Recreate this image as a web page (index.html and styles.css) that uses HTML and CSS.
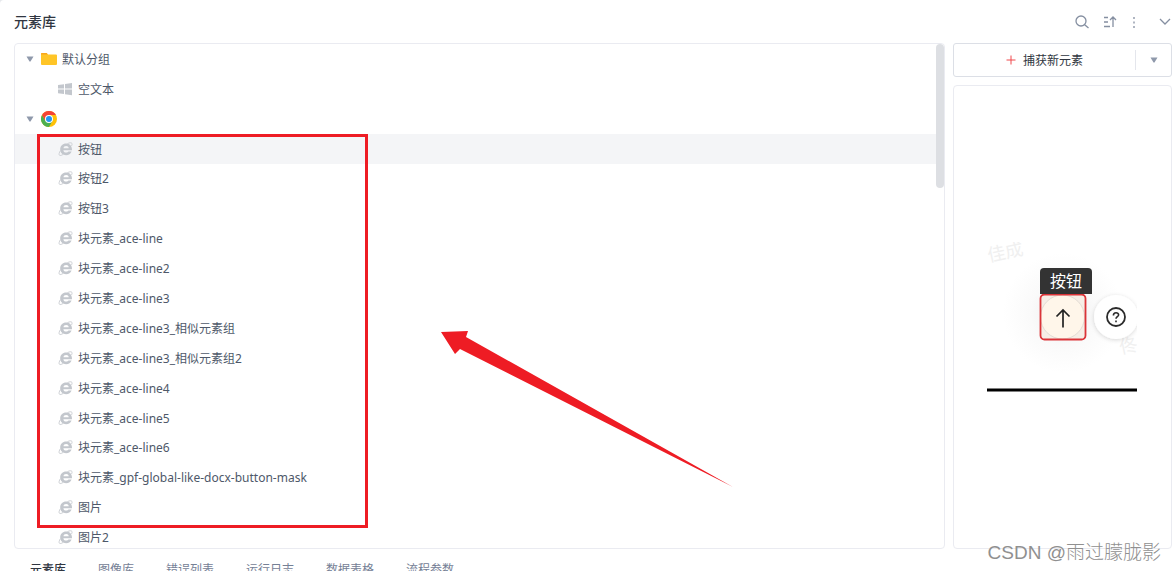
FILE: index.html
```html
<!DOCTYPE html>
<html lang="zh-CN">
<head>
<meta charset="utf-8">
<title>元素库</title>
<link rel="stylesheet" href="styles.css">
</head>
<body>
<svg class="defs" aria-hidden="true">
  <symbol id="ie" viewBox="0 0 16 16">
    <path d="M14 9.200H5.400c.1 1.500 1.100 2.300 2.700 2.300 1.100 0 1.900-.3 2.300-1h3.200c-.8 2.300-2.900 3.700-5.500 3.700-3.500 0-5.900-2.300-5.900-5.700S4.700 2.600 8.100 2.600c3.700 0 6.100 2.600 5.900 6.600zM5.500 7.200h5.200c-.1-1.400-1.100-2.200-2.600-2.200s-2.500.8-2.600 2.200z" fill="#c3c7cd" fill-rule="evenodd"/>
    <path d="M9.500 2.600C11.600 1.600 13.400 1.500 13.900 2.300c.3.600.2 1.500-.3 2.600M2.500 9.500C1.100 11.700.7 13.500 1.400 14.200c.7.600 2 .3 3.600-.7" fill="none" stroke="#cdd0d5" stroke-width="1"/>
  </symbol>
  <symbol id="caret" viewBox="0 0 8 6"><path d="M0.500 .5h7L4.500 5.500h-1z" fill="#8f99ab"/></symbol>
</svg>

<div class="app">
  <header class="header">
    <h1 class="title">元素库</h1>
    <div class="tools">
      <button class="tool" aria-label="搜索"><svg width="16" height="16" viewBox="0 0 16 16"><circle cx="7" cy="7" r="5" /><path d="M10.700 10.700 14.500 14"/></svg></button>
      <button class="tool" aria-label="排序"><svg width="16" height="16" viewBox="0 0 16 16"><path d="M2 3.500h4M2 8h4M2 12.500h6M11 13V3M8 6l3-3 3 3"/></svg></button>
      <button class="tool" aria-label="更多"><svg width="16" height="16" viewBox="0 0 16 16"><path d="M8 3v2M8 7.500v2M8 12v2"/></svg></button>
      <button class="tool tool-last" aria-label="收起"><svg width="16" height="16" viewBox="0 0 16 16"><path d="m3 5 5 5 5-5"/></svg></button>
    </div>
  </header>

  <main class="main">
    <section class="tree-box">
      <ul class="tree">
        <li class="row group"><button class="toggle" aria-label="折叠默认分组"><svg width="8" height="6"><use href="#caret"/></svg></button><svg width="16" height="16" viewBox="0 0 16 16"><path d="M0 3q0-1 1-1h4.500L7 3.500h8q1 0 1 1V13q0 1-1 1H1q-1 0-1-1z" fill="#ffc527"/><path d="M0 3q0-1 1-1h4.500L7 3.500H0z" fill="#f9a61b"/></svg><span>默认分组</span></li>
        <li class="row"><svg width="16" height="16" viewBox="0 0 16 16"><path d="M0 4l6-.8v4.400H0zM7 3l7-1v5.600H7zM0 8.600h6V13l-6-.8zM7 8.600h7v5.600l-7-1z" fill="#c3c7cd"/></svg><span>空文本</span></li>
        <li class="row group"><button class="toggle" aria-label="折叠浏览器分组"><svg width="8" height="6"><use href="#caret"/></svg></button><svg width="16" height="16" viewBox="0 0 16 16"><circle cx="8" cy="8" r="8" fill="#ffc107"/><path d="M1.070 4A8 8 0 0 0 8 16l3.460-6L8 8 4.540 10z" fill="#4caf50"/><path d="M1.070 4A8 8 0 0 1 14.930 4H8L4.540 10z" fill="#f44336"/><circle cx="8" cy="8" r="4" fill="#fff"/><circle cx="8" cy="8" r="3" fill="#2196f3"/></svg></li>
        <li class="row selected"><svg width="16" height="16"><use href="#ie"/></svg><span>按钮</span></li>
        <li class="row"><svg width="16" height="16"><use href="#ie"/></svg><span>按钮2</span></li>
        <li class="row"><svg width="16" height="16"><use href="#ie"/></svg><span>按钮3</span></li>
        <li class="row"><svg width="16" height="16"><use href="#ie"/></svg><span>块元素_ace-line</span></li>
        <li class="row"><svg width="16" height="16"><use href="#ie"/></svg><span>块元素_ace-line2</span></li>
        <li class="row"><svg width="16" height="16"><use href="#ie"/></svg><span>块元素_ace-line3</span></li>
        <li class="row"><svg width="16" height="16"><use href="#ie"/></svg><span>块元素_ace-line3_相似元素组</span></li>
        <li class="row"><svg width="16" height="16"><use href="#ie"/></svg><span>块元素_ace-line3_相似元素组2</span></li>
        <li class="row"><svg width="16" height="16"><use href="#ie"/></svg><span>块元素_ace-line4</span></li>
        <li class="row"><svg width="16" height="16"><use href="#ie"/></svg><span>块元素_ace-line5</span></li>
        <li class="row"><svg width="16" height="16"><use href="#ie"/></svg><span>块元素_ace-line6</span></li>
        <li class="row"><svg width="16" height="16"><use href="#ie"/></svg><span>块元素_gpf-global-like-docx-button-mask</span></li>
        <li class="row"><svg width="16" height="16"><use href="#ie"/></svg><span>图片</span></li>
        <li class="row"><svg width="16" height="16"><use href="#ie"/></svg><span>图片2</span></li>
      </ul>
      <div class="track"><div class="thumb"></div></div>
    </section>

    <aside class="side">
      <div class="capture">
        <button class="capture-main"><svg width="10" height="10" viewBox="0 0 10 10"><path d="M5 .5v9M.5 5h9" stroke="#f0494c" fill="none"/></svg><span>捕获新元素</span></button>
        <button class="capture-more" aria-label="更多捕获方式"><svg width="8" height="6"><use href="#caret"/></svg></button>
      </div>
      <div class="preview">
        <svg class="shot" width="150" height="150" viewBox="0 0 150 150" role="img" aria-label="按钮预览">
          <defs>
            <radialGradient id="halo"><stop offset="0" stop-color="#ededee"/><stop offset=".55" stop-color="#fafafa"/><stop offset="1" stop-color="#fff"/></radialGradient>
            <filter id="soft" x="-30%" y="-30%" width="160%" height="160%"><feDropShadow dx="0" dy="1" stdDeviation="2" flood-opacity=".16"/></filter>
          </defs>
          <circle cx="76" cy="71" r="60" fill="url(#halo)"/>
          <text class="ghost" x="2" y="20" transform="rotate(-12 2 20)">佳成</text>
          <text class="ghost" x="134" y="112" transform="rotate(-12 134 112)">佟</text>
          <circle cx="129" cy="75" r="22" fill="#fff" filter="url(#soft)"/>
          <circle cx="129" cy="75" r="9" fill="none" stroke="#2b2b2b" stroke-width="1.800"/>
          <path d="M126.400 73.400c0-3.700 5.400-3.400 5.200-.4-.1 1.600-2.600 1.700-2.600 3.800M129 78.600v1.700" fill="none" stroke="#2b2b2b" stroke-width="1.600"/>
          <rect x="53" y="53" width="45" height="44" rx="4" fill="#f6eee6"/>
          <circle cx="75.500" cy="75" r="22" fill="#fff6ea" stroke="#e4ddd5"/>
          <rect x="53.500" y="52.500" width="45" height="45" rx="4" fill="none" stroke="#db3438" stroke-width="1.800"/>
          <path d="M76 85.500V68M69.500 74.500 76 68l6.500 6.500" fill="none" stroke="#222" stroke-width="1.700"/>
          <path d="M53 52V30q0-4 4-4h44q4 0 4 4v22z" fill="#333"/>
          <text class="tip" x="63" y="45">按钮</text>
          <path d="M0 146.500h150v3H0z" fill="#000"/>
        </svg>
      </div>
    </aside>
  </main>

  <nav class="tabs">
    <button class="tab active">元素库</button>
    <button class="tab">图像库</button>
    <button class="tab">错误列表</button>
    <button class="tab">运行日志</button>
    <button class="tab">数据表格</button>
    <button class="tab">流程参数</button>
  </nav>

  <div class="mark-box"></div>
  <svg class="mark-arrow" width="292" height="158" viewBox="0 0 292 158" aria-hidden="true"><path d="M0 1 27 0 25 6 292 156 19 18 14 23z" fill="#ee1c24"/></svg>
  <div class="watermark">CSDN @雨过朦胧影</div>
</div>
</body>
</html>
```
FILE: styles.css
```css
* { box-sizing: border-box; }
body {
  margin: 0;
  background: #e6e8ec;
  font: 12px/20px "Noto Sans", "Noto Sans CJK SC", sans-serif;
  color: #4e5869;
}
button {
  display: flex;
  align-items: center;
  justify-content: center;
  border: 0;
  padding: 0;
  background: none;
  font: inherit;
  color: inherit;
}
svg { flex: none; }
.defs { position: absolute; width: 0; height: 0; }

.app {
  position: relative;
  display: flex;
  flex-direction: column;
  height: 100vh;
  overflow: hidden;
  border-top-left-radius: 4px;
  background: #fff;
}
.header {
  flex: none;
  display: flex;
  align-items: center;
  justify-content: space-between;
  height: 43px;
  padding-left: 14px;
}
.title {
  margin: 0;
  font-size: 14px;
  line-height: 20px;
  font-weight: 500;
  color: #303641;
}
.tools { display: flex; gap: 8px; padding-right: 3px; }
.tool { width: 16px; height: 20px; }
.tools .tool:first-child { margin-right: 4px; }
.tool-last { margin-left: 7px; }
.tools .tool:nth-child(3) { margin-right: 0; }
.tool svg { fill: none; stroke: #858fa1; stroke-width: 1.3; }

.main {
  flex: 1;
  display: flex;
  gap: 8px;
  min-height: 0;
  padding: 0 4px 0 14px;
}
.tree-box {
  flex: 1;
  display: flex;
  min-width: 0;
  overflow: hidden;
  border: 1px solid #eaebf1;
  border-radius: 4px;
}
.tree {
  flex: 1;
  display: grid;
  grid-template-rows: repeat(17, 1fr);
  margin: 0 0 -4px;
  padding: 0;
  list-style: none;
}
.row {
  display: flex;
  align-items: center;
  gap: 4px;
  padding-left: 43px;
}
.row span, .capture span { padding-top: 2px; }
.row.group { gap: 5px; padding-left: 9px; }
.row.group .toggle { width: 12px; height: 16px; }
.row.selected { background: #f4f5f7; }
.track { width: 8px; }
.thumb { height: 144px; border-radius: 4px; background: #dddfe3; }

.side {
  flex: none;
  display: flex;
  flex-direction: column;
  gap: 8px;
  width: 219px;
}
.capture {
  display: flex;
  align-items: center;
  height: 34px;
  border: 1px solid #dcdfe6;
  border-radius: 3px;
  color: #303641;
}
.capture-main { flex: 1; gap: 7px; height: 20px; }
.capture-more { width: 36px; height: 20px; border-left: 1px solid #e4e6ec; }
.preview {
  flex: 1;
  display: flex;
  align-items: center;
  justify-content: center;
  padding-right: 2px;
  border: 1px solid #eaebf1;
  border-radius: 4px;
}
.shot { overflow: hidden; }
.ghost { font-size: 18px; fill: #f0f0f0; }
.tip { font-size: 16px; fill: #fff; }

.tabs {
  flex: none;
  display: flex;
  gap: 32px;
  height: 22px;
  padding: 11px 30px 0;
  color: #758095;
}
.tab { height: 20px; }
.tab.active { font-weight: 500; color: #303641; }

.mark-box {
  position: absolute;
  left: 37px;
  top: 134px;
  width: 331px;
  height: 394px;
  border: 3px solid #ee1c24;
}
.mark-arrow { position: absolute; left: 441px; top: 331px; }
.watermark {
  position: absolute;
  right: 15px;
  bottom: 4px;
  font-family: "Liberation Sans", "Noto Sans CJK SC", sans-serif;
  font-size: 19px;
  line-height: 28px;
  font-weight: 300;
  color: #909090;
}
```
